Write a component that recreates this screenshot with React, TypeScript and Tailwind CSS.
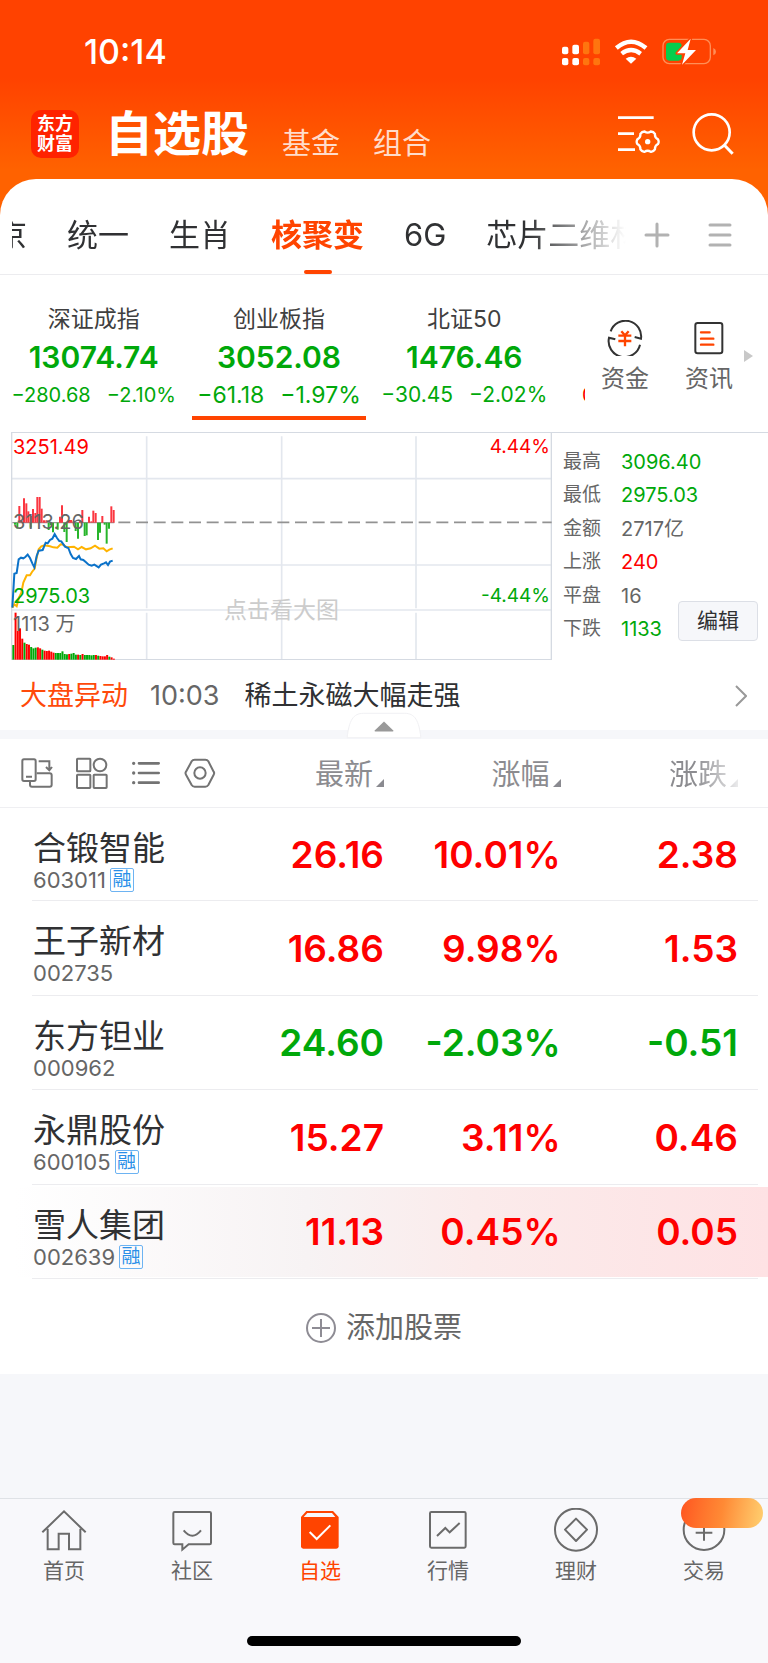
import { ReactNode } from "react"

const groups = ["京", "统一", "生肖", "核聚变", "6G", "芯片二维材料"]

const indices = [
    { name: "深证成指", value: "13074.74", change: "−280.68", rate: "−2.10%", size: "text-[20px]" },
    { name: "创业板指", value: "3052.08", change: "−61.18", rate: "−1.97%", size: "text-[23px]", active: true },
    { name: "北证50", value: "1476.46", change: "−30.45", rate: "−2.02%", size: "text-[21px]" },
]

const stats = [
    { label: "最高", value: "3096.40", color: "text-[#00a80a]" },
    { label: "最低", value: "2975.03", color: "text-[#00a80a]" },
    { label: "金额", value: "2717亿", color: "text-[#666]" },
    { label: "上涨", value: "240", color: "text-[#fe0000]" },
    { label: "平盘", value: "16", color: "text-[#666]" },
    { label: "下跌", value: "1133", color: "text-[#00a80a]" },
]

const stocks = [
    { name: "合锻智能", code: "603011", margin: true, price: "26.16", rate: "10.01%", diff: "2.38" },
    { name: "王子新材", code: "002735", margin: false, price: "16.86", rate: "9.98%", diff: "1.53" },
    { name: "东方钽业", code: "000962", margin: false, price: "24.60", rate: "-2.03%", diff: "-0.51", down: true },
    { name: "永鼎股份", code: "600105", margin: true, price: "15.27", rate: "3.11%", diff: "0.46" },
    { name: "雪人集团", code: "002639", margin: true, price: "11.13", rate: "0.45%", diff: "0.05", flash: true },
]

// [x, end y] pairs, drawn from the middle line at y = 290
const upBars = [[58, 240], [65, 284], [72, 217], [79, 232], [85, 256], [92, 270], [99, 249], [106, 261], [112, 213], [119, 213], [125, 248], [132, 283], [139, 283], [180, 272], [186, 238], [207, 282], [213, 282], [220, 286], [240, 284], [247, 252], [267, 272], [274, 286], [280, 254], [287, 261], [307, 270], [334, 241], [341, 252]]
const downBars = [[45, 296], [52, 308], [92, 305], [146, 312], [152, 298], [159, 319], [173, 311], [193, 318], [200, 348], [227, 315], [234, 338], [254, 330], [260, 328], [294, 342], [300, 320], [314, 296], [320, 353], [327, 308]]

// tops of the volume bars, base line at y = 701
const volumes = [657, 560, 615, 607, 638, 650, 654, 656, 663, 667, 665, 664, 667, 671, 674, 675, 674, 677, 680, 681, 681, 681, 676, 684, 685, 684, 683, 681, 686, 686, 687, 684, 687, 687, 687, 688, 687, 687, 689, 690, 691, 691, 687, 692, 694, 698]
const greenVolumes = [0, 5, 8, 9, 10, 13, 19, 20, 21, 22, 23, 24, 26, 27, 28, 30, 32, 33, 34, 35, 36, 38, 43]

const StatusIcons = () => (
    <svg viewBox="534 112 462 84" className="w-[154px] h-7" aria-hidden="true">
        <g fill="#fff">
            <rect x="534" y="138" width="19" height="23" rx="6" />
            <rect x="565" y="132" width="20" height="29" rx="6" />
            <rect x="534" y="172" width="19" height="22" rx="6" />
            <rect x="565" y="172" width="20" height="22" rx="6" />
        </g>
        <g fill="#ff750f">
            <rect x="597" y="123" width="19" height="38" rx="6" />
            <rect x="628" y="114" width="20" height="47" rx="6" />
            <rect x="597" y="172" width="19" height="22" rx="6" />
            <rect x="628" y="172" width="20" height="22" rx="6" />
        </g>
        <path d="M697 142Q741 104 786 142" fill="none" stroke="#fff" strokeWidth="13" />
        <path d="M713 159Q741 137 770 159" fill="none" stroke="#fff" strokeWidth="13" />
        <path d="M725 174Q741 162 757 174L741 189Z" fill="#fff" />
        <rect x="837" y="116" width="142" height="73" rx="19" fill="none" stroke="#ff8f57" strokeWidth="4" />
        <path d="M988 142q8 4 8 11t-8 11z" fill="#ff8f57" />
        <rect x="846" y="126" width="47" height="54" rx="10" fill="#06cd4c" />
        <path d="M920 114L879 158H904L894 192L936 148H911Z" fill="#fff" stroke="#ff4200" strokeWidth="9" paintOrder="stroke" strokeLinejoin="round" />
    </svg>
)

const Header = () => (
    <header className="h-[219px] bg-[linear-gradient(#ff4200_0px,#ff4200_78px,#ff6200_170px)] text-white">
        <div className="flex justify-between items-center pt-8 pl-[84px] pr-[52px]">
            <span className="text-[34px] leading-10 font-medium">10:14</span>
            <StatusIcons />
        </div>
        <div className="flex items-center pt-[30px] pl-[31px] pr-[34px]">
            <div className="w-12 h-12 rounded-[10px] bg-[#ff2300] flex flex-col justify-center text-center text-[18px] leading-5 font-bold">
                <span>东方</span>
                <span>财富</span>
            </div>
            <nav className="flex items-end gap-[33px] ml-[26px]">
                <a href="#stocks" className="text-[48px] leading-[64px] font-bold">自选股</a>
                <a href="#funds" className="text-[29px] leading-[44px] text-[#ffdccb]">基金</a>
                <a href="#portfolio" className="text-[29px] leading-[44px] text-[#ffdccb]">组合</a>
            </nav>
            <button aria-label="管理" className="ml-auto">
                <svg viewBox="702 346 126 114" className="w-[42px] h-[38px]" fill="none" stroke="#fff" strokeWidth="8">
                    <path d="M702 354H809M702 402H750M702 450H753" />
                    <path transform="translate(791 426)" strokeWidth="7" d="M31 -7Q35 0 31 7Q21 12 21.8 23.4Q17.5 30.3 9.4 30.6Q0 24 -9.4 30.6Q-17.5 30.3 -21.8 23.4Q-21 12 -31 7Q-35 0 -31 -7Q-21 -12 -21.8 -23.4Q-17.5 -30.3 -9.4 -30.6Q0 -24 9.4 -30.6Q17.5 -30.3 21.8 -23.4Q21 -12 31 -7Z" />
                    <circle cx="791" cy="426" r="8" fill="#fff" stroke="none" />
                </svg>
            </button>
            <button aria-label="搜索" className="ml-8">
                <svg viewBox="925 338 126 126" className="w-[42px] h-[42px]" fill="none" stroke="#fff" strokeWidth="8">
                    <circle cx="984" cy="396" r="54" />
                    <path d="M1021 433L1047 460" strokeWidth="9" />
                </svg>
            </button>
        </div>
    </header>
)

const GroupTabs = () => (
    <div className="flex items-center h-24 pl-3 pr-9 border-b border-[#ececef]">
        <nav className="flex-1 min-w-0 flex gap-10 h-full items-center overflow-hidden whitespace-nowrap text-[31px] text-[#303133] mask-r-from-[84%]">
            {groups.map((group, i) => (
                <a
                    key={group}
                    href="#group"
                    className={`relative h-full flex items-center pt-[18px] ${
                        group === "核聚变"
                            ? "font-bold text-[#ff4400] after:absolute after:bottom-0 after:left-1/2 after:-translate-x-1/2 after:w-7 after:h-1 after:rounded-sm after:bg-[#ff4400]"
                            : i === 0 ? "-ml-4" : ""
                    }`}
                >
                    {group}
                </a>
            ))}
        </nav>
        <button aria-label="添加分组" className="ml-[18px] pt-4">
            <svg viewBox="0 0 26 26" className="w-[26px] h-[26px]" stroke="#b2b2b2" strokeWidth="3" strokeLinecap="round">
                <path d="M13 2V24M2 13H24" />
            </svg>
        </button>
        <button aria-label="全部分组" className="ml-[38px] pt-4">
            <svg viewBox="0 0 24 26" className="w-6 h-[26px]" stroke="#b2b2b2" strokeWidth="3" strokeLinecap="round">
                <path d="M2 3H22M2 13H22M2 23H22" />
            </svg>
        </button>
    </div>
)

const IndexBar = () => (
    <div className="flex pt-[30px] pr-[15px] pb-3">
        <ul className="flex-1 grid grid-cols-3 pl-px text-center text-[#00a80a]">
            {indices.map((item) => (
                <li key={item.name} className="whitespace-nowrap">
                    <div className="text-[23px] leading-7 text-[#404040]">{item.name}</div>
                    <div className="mt-1 text-[30px] leading-10 font-semibold">{item.value}</div>
                    <div className={`mt-1 leading-7 flex justify-center gap-4 ${item.size}`}>
                        <span>{item.change}</span>
                        <span>{item.rate}</span>
                    </div>
                    {item.active && <div className="mt-[7px] mx-1.5 h-1 bg-[#ff4400]" />}
                </li>
            ))}
        </ul>
        <div className="w-[28px] pt-[76px] pl-[25px] overflow-hidden text-[20px] leading-7 text-[#fe0000]">0</div>
        <div className="flex items-start pt-[15px] pl-4 text-[24px] leading-7 text-[#666]">
            <button className="flex flex-col items-center gap-[9px]">
                <svg viewBox="669 89 108 108" className="w-9 h-9" fill="none" stroke="#333" strokeWidth="6">
                    <path d="M680 123A47 47 0 0 1 771 145L752 140" />
                    <path d="M768 163A47 47 0 0 1 675 142L694 147" />
                    <path d="M712 123L723 135L734 123M703 136H742M703 152H742M723 135V168" stroke="#ff4400" strokeWidth="7" />
                </svg>
                资金
            </button>
            <button className="flex flex-col items-center gap-[9px] ml-9">
                <svg viewBox="924 89 108 108" className="w-9 h-9" fill="none" stroke="#333" strokeWidth="6">
                    <rect x="937" y="98" width="81" height="91" rx="7" />
                    <path d="M954 126H980M954 145H991M954 163H991" stroke="#ff4400" strokeWidth="7" strokeLinecap="round" />
                </svg>
                资讯
            </button>
            <svg viewBox="0 0 9 12" className="w-[9px] h-3 mt-[30px] ml-[11px]" fill="#c8c8c8" aria-hidden="true">
                <path d="M0 0L9 6L0 12Z" />
            </svg>
        </div>
    </div>
)

const Chart = () => (
    <div className="relative flex-1 h-[227px] text-[20px] leading-6">
        <svg viewBox="33 21 1623 681" preserveAspectRatio="none" className="w-full h-full" fill="none">
            <g stroke="#e3e7ee" strokeWidth="5">
                <path d="M35 158H1655M35 417H1655M35 552H1655" />
                <path d="M440 31V547M440 560V702M845 31V547M845 560V702M1248 31V547M1248 560V702" />
                <path d="M35 21V702M1654 21V702M33 701H1656" stroke="#d5dae2" strokeWidth="4" />
            </g>
            <path d="M37 290H343" stroke="#999" strokeWidth="4" />
            <path d="M355 289H1655" stroke="#929292" strokeWidth="5" strokeDasharray="36 17" />
            {upBars.map(([x, y]) => <path key={x} d={`M${x} 290V${y}`} stroke="#fb3640" strokeWidth="6" />)}
            {downBars.map(([x, y]) => <path key={x} d={`M${x} 290V${y}`} stroke="#27b52b" strokeWidth="6" />)}
            {volumes.map((y, i) => (
                <path key={i} d={`M${40 + i * 6.7} 701V${y}`} stroke={greenVolumes.includes(i) ? "#00a80a" : "#fe0000"} strokeWidth="6" />
            ))}
            <polyline points="37,545 43,535 50,541 57,515 64,500 70,470 80,448 90,448 96,438 104,428 110,395 116,370 124,361 133,358 150,361 160,364 172,365 182,355 190,356 200,364 222,362 234,370 245,363 258,370 272,367 285,359 298,368 310,367 320,376 328,371 338,367" stroke="#ffb300" strokeWidth="6" />
            <polyline points="37,545 43,443 50,441 56,400 63,395 70,397 76,393 83,386 90,396 97,412 103,424 110,390 116,374 128,372 137,350 143,352 150,342 157,338 164,324 171,336 178,345 184,346 195,362 205,366 212,384 219,396 228,399 237,390 242,400 250,402 258,409 266,416 275,419 283,416 296,424 303,416 312,412 318,409 324,417 330,407 338,404" stroke="#0b72c9" strokeWidth="6" />
        </svg>
        <span className="absolute left-0.5 top-0.5 text-[#fe0000]">3251.49</span>
        <span className="absolute left-0.5 top-[77px] text-[#666]">3113.26</span>
        <span className="absolute left-0.5 top-[151px] text-[#00a80a]">2975.03</span>
        <span className="absolute left-0.5 top-[179px] text-[#666]">1113 万</span>
        <span className="absolute right-0.5 top-0.5 text-[19px] text-[#fe0000]">4.44%</span>
        <span className="absolute right-0.5 top-[151px] text-[19px] text-[#00a80a]">-4.44%</span>
        <span className="absolute inset-x-0 top-[165px] text-center text-[23px] text-[#ccc]">点击看大图</span>
    </div>
)

const MarketPanel = () => (
    <div className="flex ml-[11px] border-t border-[#d5dae2]">
        <Chart />
        <div className="w-[216px] flex pl-[11px] pr-[10px]">
            <dl className="flex-1 grid grid-rows-6 pt-3 pb-[14px] text-[19px] leading-6">
                {stats.map((item) => (
                    <div key={item.label} className="flex items-center">
                        <dt className="w-[58px] text-[#666]">{item.label}</dt>
                        <dd className={`text-[20px] ${item.color}`}>{item.value}</dd>
                    </div>
                ))}
            </dl>
            <button className="self-end mb-[19px] -ml-8 w-20 h-10 rounded-sm border border-[#dcdfe6] bg-[#f6f7fa] text-[21px] text-[#303133]">编辑</button>
        </div>
    </div>
)

const NewsLine = () => (
    <a href="#news" className="flex items-center h-[70px] pt-0.5 pl-5 pr-[21px] text-[27px] text-[#303133]">
        <span className="text-[#ff4a0a]">大盘异动</span>
        <span className="ml-[22px] text-[#666]">10:03</span>
        <span className="ml-[25px]">稀土永磁大幅走强</span>
        <svg viewBox="0 0 12 22" className="w-3 h-[22px] ml-auto" fill="none" stroke="#999" strokeWidth="2" aria-hidden="true">
            <path d="M1 1L11 11L1 21" />
        </svg>
    </a>
)

const Divider = () => (
    <div className="relative h-[9px] bg-[#f6f7fa]">
        <button aria-label="收起" className="absolute bottom-0 left-1/2 -translate-x-1/2">
            <svg viewBox="1036 154 232 82" className="w-[77px] h-[27px] block">
                <path d="M1040 232C1046 180 1058 158 1090 158H1215C1246 158 1258 180 1264 232Z" fill="#fff" stroke="#f0f0f3" strokeWidth="3" />
                <path d="M1123 211L1152 183L1181 211Q1181 213 1178 213H1126Q1123 213 1123 211Z" fill="#999" />
            </svg>
        </button>
    </div>
)

const ToolIcons = () => (
    <div className="flex items-center gap-[23px] pl-[21px]">
        <button aria-label="横屏">
            <svg viewBox="63 290 96 96" className="w-8 h-8" fill="none" stroke="#737373" strokeWidth="6">
                <rect x="67" y="297" width="40" height="65" rx="5" />
                <path d="M78 349H96M116 303H148V328M138 320L148 330L156 320M110 339H149Q155 339 155 345V373Q155 379 149 379H96Q90 379 90 373V364" />
            </svg>
        </button>
        <button aria-label="宫格">
            <svg viewBox="226 290 96 96" className="w-8 h-8" fill="none" stroke="#737373" strokeWidth="6">
                <rect x="229" y="295" width="40" height="38" rx="2" />
                <circle cx="298" cy="314" r="19" />
                <rect x="229" y="343" width="40" height="40" rx="2" />
                <rect x="279" y="343" width="39" height="40" rx="2" />
            </svg>
        </button>
        <button aria-label="列表">
            <svg viewBox="392 291 90 96" className="w-[30px] h-8" fill="none" stroke="#737373" strokeWidth="8" strokeLinecap="round">
                <path d="M416 310H475M416 339H475M416 368H475" />
                <path d="M400 310h.1M400 339h.1M400 368h.1" strokeWidth="10" />
            </svg>
        </button>
        <button aria-label="设置">
            <svg viewBox="552 290 96 96" className="w-8 h-8" fill="none" stroke="#737373" strokeWidth="6" strokeLinejoin="round">
                <path d="M558 334L575 303Q578 298 584 298H616Q622 298 625 303L641 334Q644 338 641 343L625 374Q622 379 616 379H584Q578 379 575 374L558 343Q555 338 558 334Z" />
                <circle cx="600" cy="338" r="17" />
            </svg>
        </button>
    </div>
)

const SortHead = ({ children }: { children: ReactNode }) => (
    <button className="inline-flex items-end gap-[3px] pt-1">
        {children}
        <svg viewBox="0 0 8 8" className="w-2 h-2 mb-2" fill="#8a8a90" aria-hidden="true">
            <path d="M8 0V8H0Z" />
        </svg>
    </button>
)

const StockTable = () => (
    <table className="w-full table-fixed">
        <thead>
            <tr className="h-[68px] border-b border-[#efeff2] text-[29px] leading-10 text-[#8c8c90] text-right">
                <th className="w-[30%] font-normal"><ToolIcons /></th>
                <th className="w-[20%] font-normal"><SortHead>最新</SortHead></th>
                <th className="w-[23%] font-normal"><SortHead>涨幅</SortHead></th>
                <th className="w-[27%] font-normal pr-[30px] mask-r-from-65% mask-r-to-90%"><SortHead>涨跌</SortHead></th>
            </tr>
        </thead>
        <tbody>
            {stocks.map((item) => (
                <tr
                    key={item.code}
                    className={`relative h-[94px] even:h-[95px] text-right text-[37px] font-semibold after:absolute after:left-8 after:right-[10px] after:bottom-0 after:h-px after:bg-[#ececef] ${item.down ? "text-[#00a80a]" : "text-[#fe0000]"} ${item.flash ? "bg-[linear-gradient(90deg,#fff_2%,#f7f3f4_40%,#fbebeb_62%,#fee2e4)] bg-[length:100%_90px] bg-[position:0_2px] bg-no-repeat" : ""}`}
                >
                    <td className="pl-[33px] pt-5 align-top text-left font-normal">
                        <div className="text-[33px] leading-10 whitespace-nowrap text-[#303133]">{item.name}</div>
                        <div className="flex items-center gap-1 text-[22px] leading-6 text-[#666]">
                            {item.code}
                            {item.margin && <span className="w-6 h-6 flex items-center justify-center rounded-xs border border-[#6db3f2] text-[19px] text-[#2a8fe8]">融</span>}
                        </div>
                    </td>
                    <td>{item.price}</td>
                    <td>{item.rate}</td>
                    <td className="pr-[30px]">{item.diff}</td>
                </tr>
            ))}
        </tbody>
    </table>
)

const navItems = [
    {
        label: "首页",
        box: "124 84 138 132",
        icon: <path d="M128 157L193 94L258 157M144 146V208H177V161H208V208H242V146" />,
    },
    {
        label: "社区",
        box: "507 84 138 132",
        icon: <path d="M524 96H629Q633 96 633 100V189Q633 193 629 193H566L547 209V193H524Q520 193 520 189V100Q520 96 524 96ZM551 151Q577 183 603 151" />,
    },
    {
        label: "自选",
        box: "891 84 138 132",
        active: true,
        icon: (
            <>
                <path d="M919 93H999L1016 111V199Q1016 206 1009 206H910Q903 206 903 199V111Z" fill="#ff4400" stroke="none" />
                <path d="M922 99H996L1006 111H911Z" fill="#f8f8fb" stroke="none" />
                <path d="M929 156L950 177L991 136" stroke="#fff" />
            </>
        ),
    },
    {
        label: "行情",
        box: "123 84 138 132",
        icon: <><rect x="138" y="96" width="107" height="107" rx="4" /><path d="M159 168L184 144L197 157L227 129" /></>,
    },
    {
        label: "理财",
        box: "507 84 138 132",
        icon: <><circle cx="576" cy="149" r="63" /><path d="M576 116L609 149L576 183L543 149Z" strokeLinejoin="round" /></>,
    },
    {
        label: "交易",
        box: "890 84 138 132",
        badge: true,
        icon: <><circle cx="959" cy="149" r="61" /><path d="M934 158H984M959 132V182" /></>,
    },
]

const BottomNav = () => (
    <footer className="mt-auto bg-[#f8f8fb] border-t border-[#dfe2e6] pb-[17px]">
        <nav className="grid grid-cols-6">
            {navItems.map((item) => (
                <a key={item.label} href="#nav" className={`relative flex flex-col items-center pt-[9px] text-[21px] leading-[30px] ${item.active ? "text-[#ff4400]" : "text-[#666]"}`}>
                    <svg viewBox={item.box} className="w-[46px] h-11 mb-1" fill="none" stroke="#6b6b6b" strokeWidth="6" aria-hidden="true">
                        {item.icon}
                    </svg>
                    {item.label}
                    {item.badge && <span className="absolute -top-px right-[5px] w-[82px] h-[30px] rounded-full bg-linear-100 from-[#ff5420] via-[#ff8a35] to-[#ffd070]" />}
                </a>
            ))}
        </nav>
        <div className="mt-[50px] mx-auto w-[274px] h-[10px] rounded-full bg-black" />
    </footer>
)

export default function App() {
    return (
        <div className="min-h-screen flex flex-col bg-[#f6f7fa] font-['Inter','Noto_Sans_CJK_SC',sans-serif]">
            <Header />
            <main className="-mt-10 rounded-t-[36px] bg-white">
                <GroupTabs />
                <IndexBar />
                <MarketPanel />
                <NewsLine />
                <Divider />
                <StockTable />
                <button className="w-full h-[95px] pt-0.5 flex items-center justify-center gap-[10px] text-[29px] text-[#666]">
                    <svg viewBox="0 0 30 30" className="w-[30px] h-[30px]" fill="none" stroke="#8e8c94" strokeWidth="2" aria-hidden="true">
                        <circle cx="15" cy="15" r="14" />
                        <path d="M6 15H24M15 6V24" />
                    </svg>
                    添加股票
                </button>
            </main>
            <BottomNav />
        </div>
    )
}
